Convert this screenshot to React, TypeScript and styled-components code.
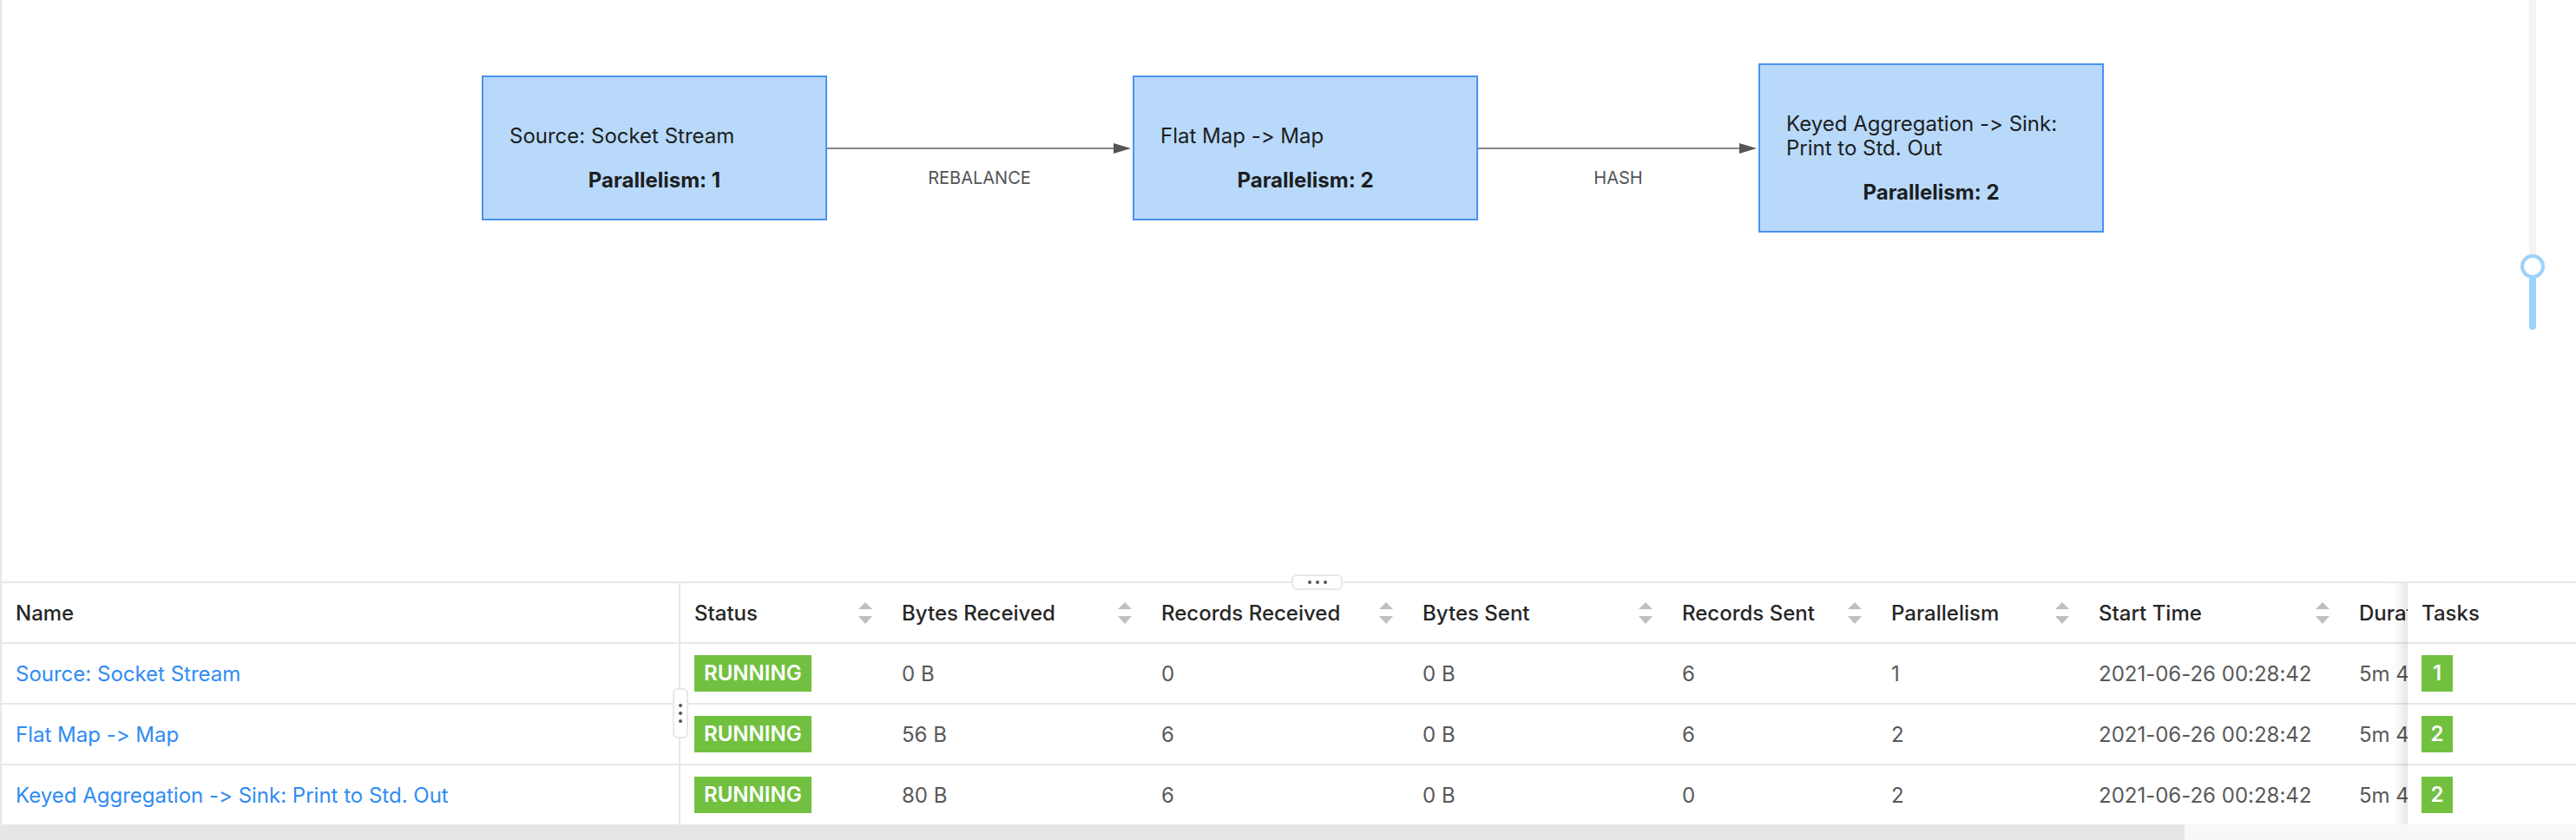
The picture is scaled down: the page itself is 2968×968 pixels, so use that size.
import React from "react";
import styled, { createGlobalStyle } from "styled-components";

const GlobalStyle = createGlobalStyle`
  html, body {
    margin: 0;
    padding: 0;
    background: #fff;
  }
  body {
    font-family: Inter, "Noto Sans", "Liberation Sans", sans-serif;
    font-feature-settings: "calt" 0, "liga" 0;
    font-variant-ligatures: none;
    -webkit-font-smoothing: antialiased;
  }
  * {
    box-sizing: border-box;
  }
`;

type Vertex = {
  id: string;
  name: string;
  parallelism: number;
  left: number;
  top: number;
};

type Edge = {
  from: number;
  to: number;
  y: number;
  label: string;
};

type VertexRow = {
  name: string;
  bytesIn: string;
  recordsIn: string;
  bytesOut: string;
  recordsOut: string;
  parallelism: number;
  startTime: string;
  duration: string;
  endTime: string;
  tasks: number;
};

const vertices: Vertex[] = [
  { id: "a", name: "Source: Socket Stream", parallelism: 1, left: 553, top: 87 },
  { id: "b", name: "Flat Map -> Map", parallelism: 2, left: 1303, top: 87 },
  {
    id: "c",
    name: "Keyed Aggregation -> Sink: Print to Std. Out",
    parallelism: 2,
    left: 2024,
    top: 73,
  },
];

const edges: Edge[] = [
  { from: 950, to: 1303, y: 171, label: "REBALANCE" },
  { from: 1701, to: 2024, y: 171, label: "HASH" },
];

const rows: VertexRow[] = [
  {
    name: "Source: Socket Stream",
    bytesIn: "0 B",
    recordsIn: "0",
    bytesOut: "0 B",
    recordsOut: "6",
    parallelism: 1,
    startTime: "2021-06-26 00:28:42",
    duration: "5m 42s",
    endTime: "-",
    tasks: 1,
  },
  {
    name: "Flat Map -> Map",
    bytesIn: "56 B",
    recordsIn: "6",
    bytesOut: "0 B",
    recordsOut: "6",
    parallelism: 2,
    startTime: "2021-06-26 00:28:42",
    duration: "5m 42s",
    endTime: "-",
    tasks: 2,
  },
  {
    name: "Keyed Aggregation -> Sink: Print to Std. Out",
    bytesIn: "80 B",
    recordsIn: "6",
    bytesOut: "0 B",
    recordsOut: "0",
    parallelism: 2,
    startTime: "2021-06-26 00:28:42",
    duration: "5m 42s",
    endTime: "-",
    tasks: 2,
  },
];

const columns = [
  { title: "Name", width: 782, sortable: false },
  { title: "Status", width: 239, sortable: true },
  { title: "Bytes Received", width: 299, sortable: true },
  { title: "Records Received", width: 301, sortable: true },
  { title: "Bytes Sent", width: 299, sortable: true },
  { title: "Records Sent", width: 241, sortable: true },
  { title: "Parallelism", width: 239, sortable: true },
  { title: "Start Time", width: 300, sortable: true },
  { title: "Duration", width: 240, sortable: true },
  { title: "End Time", width: 364, sortable: true },
];

const TASKS_WIDTH = 194;
const VISIBLE_WIDTH = 2966;
const TABLE_WIDTH =
  columns.reduce((sum, c) => sum + c.width, 0) + TASKS_WIDTH;

const Page = styled.div`
  width: 2968px;
  height: 968px;
  border-left: 2px solid #e8e8e8;
  display: flex;
  flex-direction: column;
  overflow: hidden;
`;

/* ---------- graph ---------- */

const GraphPane = styled.div`
  position: relative;
  height: 670px;
  flex: none;
`;

const EdgeLayer = styled.svg`
  position: absolute;
  inset: 0;
  width: 100%;
  height: 100%;
  pointer-events: none;
`;

const EdgeLabel = styled.text`
  font-family: Inter, "Noto Sans", sans-serif;
  font-size: 20px;
  fill: #555;
`;

const NodeBox = styled.div<{ $left: number; $top: number }>`
  position: absolute;
  left: ${(p) => p.$left}px;
  top: ${(p) => p.$top}px;
  width: 398px;
  padding: 54px 22px 30px 30px;
  background: #b8d9fa;
  border: 2px solid #4a92f2;
  color: #1c1e21;
  font-size: 24px;
  line-height: 28px;
`;

const NodeName = styled.div`
  font-weight: 400;
`;

const NodeParallelism = styled.div`
  margin-top: 23px;
  margin-right: 8px;
  text-align: center;
  font-weight: 700;
`;

const ZoomSlider = styled.div`
  position: absolute;
  top: 0;
  right: 46px;
  width: 8px;
  height: 380px;
  background: #f3f3f3;
  border-radius: 0 0 4px 4px;
`;

const SliderTrack = styled.div`
  position: absolute;
  left: 0;
  right: 0;
  bottom: 0;
  height: 73px;
  background: #9dd3fb;
  border-radius: 0 0 4px 4px;
`;

const SliderHandle = styled.div`
  position: absolute;
  left: 50%;
  bottom: 73px;
  width: 28px;
  height: 28px;
  margin-left: -14px;
  margin-bottom: -14px;
  border: 4px solid #9dd3fb;
  border-radius: 50%;
  background: #fff;
`;

/* ---------- table ---------- */

const TableSection = styled.div`
  position: relative;
  flex: 1;
  border-top: 2px solid #e8e8e8;
  display: flex;
  flex-direction: column;
`;

const PaneHandle = styled.div`
  position: absolute;
  top: -10px;
  left: 1486px;
  width: 59px;
  height: 18px;
  border: 2px solid #e8e8e8;
  border-radius: 6px;
  background: #fff;
  display: flex;
  align-items: center;
  justify-content: center;
  gap: 5px;
  z-index: 5;
`;

const ColumnHandle = styled.div`
  position: absolute;
  top: 121px;
  left: 773px;
  width: 18px;
  height: 58px;
  border: 2px solid #e8e8e8;
  border-radius: 6px;
  background: #fff;
  display: flex;
  flex-direction: column;
  align-items: center;
  justify-content: center;
  gap: 5px;
  z-index: 5;
`;

const Dot = styled.span`
  width: 4px;
  height: 4px;
  border-radius: 50%;
  background: #555;
`;

const TableScroll = styled.div`
  flex: none;
  height: 278px;
  overflow: hidden;
`;

const Table = styled.table`
  table-layout: fixed;
  border-collapse: separate;
  border-spacing: 0;
  font-size: 24px;
`;

const Row = styled.tr`
  height: 70px;
`;

const HeadCell = styled.th<{ $divider?: boolean }>`
  padding: 0 18px 0 16px;
  text-align: left;
  font-weight: 500;
  color: #262626;
  background: #fff;
  border-bottom: 2px solid #e8e8e8;
  border-right: ${(p) => (p.$divider ? "2px solid #e8e8e8" : "none")};
  white-space: nowrap;
  overflow: hidden;
`;

const HeadInner = styled.div`
  display: flex;
  align-items: center;
  justify-content: space-between;
`;

const Cell = styled.td<{ $divider?: boolean }>`
  padding: 0 16px;
  color: #595959;
  background: #fff;
  border-bottom: 2px solid #e8e8e8;
  border-right: ${(p) => (p.$divider ? "2px solid #e8e8e8" : "none")};
  white-space: nowrap;
  overflow: hidden;
`;

const FixedCell = styled.td`
  position: sticky;
  right: 0;
  z-index: 2;
  padding: 0 16px;
  background: #fff;
  border-bottom: 2px solid #e8e8e8;
  text-align: left;
  font-weight: 500;
  color: #262626;

  &::after {
    content: "";
    position: absolute;
    top: 0;
    bottom: -2px;
    left: 0;
    width: 60px;
    transform: translateX(-100%);
    box-shadow: inset -20px 0 16px -16px rgba(0, 0, 0, 0.15);
    pointer-events: none;
  }
`;

const NameLink = styled.a`
  color: #2f8cf3;
  text-decoration: none;
`;

const Badge = styled.span<{ $square?: boolean }>`
  display: inline-block;
  height: 42px;
  line-height: 42px;
  padding: 0 ${(p) => (p.$square ? 0 : 11)}px;
  width: ${(p) => (p.$square ? "36px" : "auto")};
  text-align: center;
  background: #72c040;
  color: #fff;
  font-weight: 600;
  vertical-align: middle;
`;

const ScrollTrack = styled.div`
  flex: none;
  height: 18px;
  background: #f8f8f8;
`;

const ScrollThumb = styled.div`
  height: 100%;
  background: #e6e6e6;
`;

const SortIcon: React.FC = () => (
  <svg width="16" height="25" viewBox="0 0 16 25" style={{ flex: "none" }}>
    <polygon points="0,8 8,0 16,8" fill="#bfbfbf" />
    <polygon points="0,16 16,16 8,25" fill="#bfbfbf" />
  </svg>
);

const DependencyGraph: React.FC = () => (
  <GraphPane>
    <EdgeLayer>
      {edges.map((e) => {
        const tip = e.to - 2;
        const mid = (e.from + e.to) / 2;
        return (
          <g key={e.label}>
            <line
              x1={e.from}
              y1={e.y}
              x2={tip - 20}
              y2={e.y}
              stroke="#888"
              strokeWidth={2}
            />
            <polygon
              points={`${tip - 20},${e.y - 6} ${tip},${e.y} ${tip - 20},${e.y + 6}`}
              fill="#555"
            />
            <EdgeLabel x={mid} y={e.y + 34} textAnchor="middle" dominantBaseline="central">
              {e.label}
            </EdgeLabel>
          </g>
        );
      })}
    </EdgeLayer>
    {vertices.map((v) => (
      <NodeBox key={v.id} $left={v.left} $top={v.top}>
        <NodeName>{v.name}</NodeName>
        <NodeParallelism>Parallelism: {v.parallelism}</NodeParallelism>
      </NodeBox>
    ))}
    <ZoomSlider>
      <SliderTrack />
      <SliderHandle />
    </ZoomSlider>
  </GraphPane>
);

const VertexTable: React.FC = () => (
  <TableSection>
    <PaneHandle>
      <Dot />
      <Dot />
      <Dot />
    </PaneHandle>
    <ColumnHandle>
      <Dot />
      <Dot />
      <Dot />
    </ColumnHandle>
    <TableScroll>
      <Table style={{ width: TABLE_WIDTH }}>
        <colgroup>
          {columns.map((c) => (
            <col key={c.title} style={{ width: c.width }} />
          ))}
          <col style={{ width: TASKS_WIDTH }} />
        </colgroup>
        <thead>
          <Row>
            {columns.map((c, i) => (
              <HeadCell key={c.title} $divider={i === 0}>
                <HeadInner>
                  <span>{c.title}</span>
                  {c.sortable && <SortIcon />}
                </HeadInner>
              </HeadCell>
            ))}
            <FixedCell as="th">Tasks</FixedCell>
          </Row>
        </thead>
        <tbody>
          {rows.map((r) => (
            <Row key={r.name}>
              <Cell $divider>
                <NameLink href="#">{r.name}</NameLink>
              </Cell>
              <Cell>
                <Badge>RUNNING</Badge>
              </Cell>
              <Cell>{r.bytesIn}</Cell>
              <Cell>{r.recordsIn}</Cell>
              <Cell>{r.bytesOut}</Cell>
              <Cell>{r.recordsOut}</Cell>
              <Cell>{r.parallelism}</Cell>
              <Cell>{r.startTime}</Cell>
              <Cell>{r.duration}</Cell>
              <Cell>{r.endTime}</Cell>
              <FixedCell>
                <Badge $square>{r.tasks}</Badge>
              </FixedCell>
            </Row>
          ))}
        </tbody>
      </Table>
    </TableScroll>
    <ScrollTrack>
      <ScrollThumb style={{ width: `${(VISIBLE_WIDTH / TABLE_WIDTH) * 100}%` }} />
    </ScrollTrack>
  </TableSection>
);

const App: React.FC = () => {
  return (
    <>
      <GlobalStyle />
      <Page>
        <DependencyGraph />
        <VertexTable />
      </Page>
    </>
  );
};

export default App;
